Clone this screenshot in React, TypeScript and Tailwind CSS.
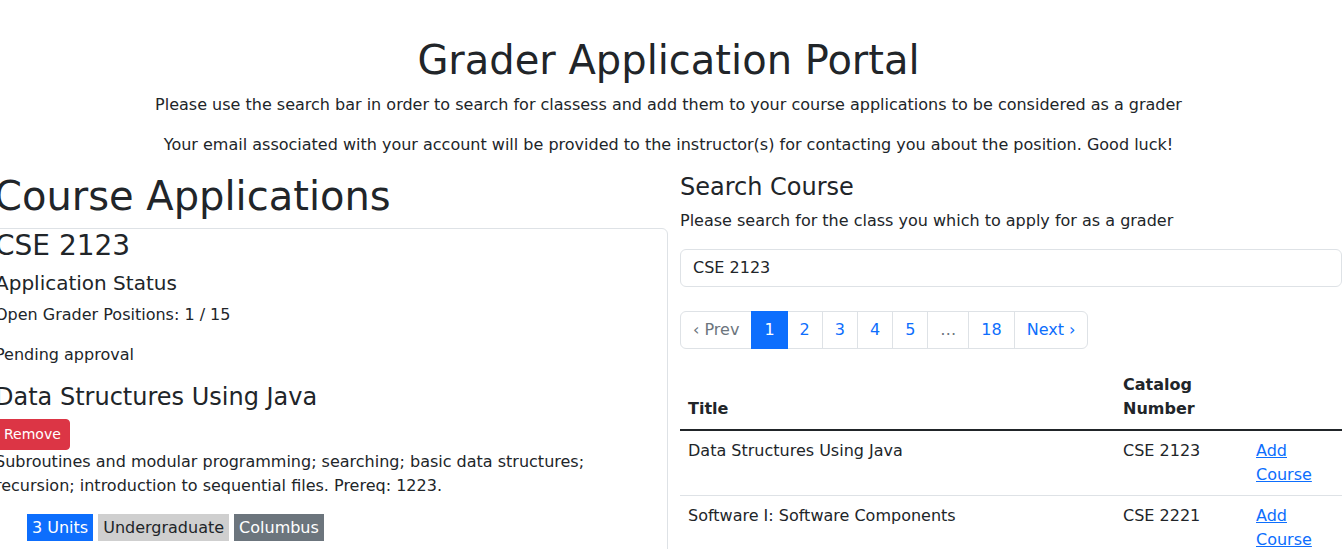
const pages = ['1', '2', '3', '4', '5'];

const courses = [
  { title: 'Data Structures Using Java', catalog: 'CSE 2123' },
  { title: 'Software I: Software Components', catalog: 'CSE 2221' },
];

function Pagination() {
  return (
    <ul className="mb-4 flex text-base leading-6">
      <li className="rounded-l-md border border-[#dee2e6] px-3 py-1.5 text-[#6c757d]">‹ Prev</li>
      {pages.map((p) =>
        p === '1' ? (
          <li key={p} className="relative z-10 -ml-px border border-[#0d6efd] bg-[#0d6efd] px-3 py-1.5 text-white">
            {p}
          </li>
        ) : (
          <li key={p} className="-ml-px border border-[#dee2e6] px-3 py-1.5 text-[#0d6efd]">
            {p}
          </li>
        ),
      )}
      <li className="-ml-px border border-[#dee2e6] px-3 py-1.5 text-[#6c757d]">…</li>
      <li className="-ml-px border border-[#dee2e6] px-3 py-1.5 text-[#0d6efd]">18</li>
      <li className="-ml-px rounded-r-md border border-[#dee2e6] px-3 py-1.5 text-[#0d6efd]">Next ›</li>
    </ul>
  );
}

export default function App() {
  return (
    <div className="h-[549px] w-[1342px] overflow-hidden bg-white font-['DejaVu_Sans',sans-serif] text-base leading-6 text-[#212529]">
      <header className="pt-[36px] pr-[5px] text-center">
        <h1 className="mb-[9px] text-[40px] leading-[1.2]">Grader Application Portal</h1>
        <p className="mb-4">
          Please use the search bar in order to search for classess and add them to your course applications to be
          considered as a grader
        </p>
        <p className="mb-[15px]">
          Your email associated with your account will be provided to the instructor(s) for contacting you about the
          position. Good luck!
        </p>
      </header>

      <div className="flex">
        <section className="-ml-[6px] w-[674px] flex-none">
          <h1 className="mb-2 text-[40px] leading-[1.2]">Course Applications</h1>
          <div className="rounded-md border border-[#dee2e6]">
            <h3 className="mb-2 text-[28px] leading-[1.2]">CSE 2123</h3>
            <h5 className="mb-2 text-[20px] leading-[1.2]">Application Status</h5>
            <p className="mb-4">Open Grader Positions: 1 / 15</p>
            <p className="mb-4">Pending approval</p>
            <h4 className="mb-2 text-[24px] leading-[1.2]">Data Structures Using Java</h4>
            <button className="rounded border border-[#dc3545] bg-[#dc3545] px-2 py-1 text-sm leading-[1.5] text-white">
              Remove
            </button>
            <p className="mb-4">
              Subroutines and modular programming; searching; basic data structures;
              <br />
              recursion; introduction to sequential files. Prereq: 1223.
            </p>
            <ul className="mb-4 flex gap-[5px] pl-8">
              <li className="bg-[#0d6efd] px-[5px] py-[4px] leading-[19px] text-white">3 Units</li>
              <li className="bg-[#cfcfcf] px-[5px] py-[4px] leading-[19px] text-[#212529]">Undergraduate</li>
              <li className="bg-[#6c757d] px-[5px] py-[4px] leading-[19px] text-white">Columbus</li>
            </ul>
          </div>
        </section>

        <section className="ml-[12px] min-w-0 flex-1">
          <h4 className="mb-[7px] pt-px text-[24px] leading-[1.2]">Search Course</h4>
          <p className="mb-4">Please search for the class you which to apply for as a grader</p>
          <input
            className="mb-6 block w-full rounded-md border border-[#dee2e6] px-3 py-1.5 leading-6 text-[#212529] outline-none"
            defaultValue="CSE 2123"
          />
          <Pagination />
          <table className="w-full table-fixed border-collapse text-left">
            <thead>
              <tr>
                <th className="w-[435px] border-b-2 border-[#212529] p-2 align-bottom font-bold">Title</th>
                <th className="w-[133px] border-b-2 border-[#212529] p-2 align-bottom font-bold">Catalog Number</th>
                <th className="border-b-2 border-[#212529] p-2 align-bottom font-bold"></th>
              </tr>
            </thead>
            <tbody>
              {courses.map((c) => (
                <tr key={c.catalog}>
                  <td className="border-b border-[#dee2e6] p-2 align-top">{c.title}</td>
                  <td className="border-b border-[#dee2e6] p-2 align-top">{c.catalog}</td>
                  <td className="border-b border-[#dee2e6] p-2 align-top">
                    <a href="#" className="text-[#0d6efd] underline">
                      Add Course
                    </a>
                  </td>
                </tr>
              ))}
            </tbody>
          </table>
        </section>
      </div>
    </div>
  );
}
